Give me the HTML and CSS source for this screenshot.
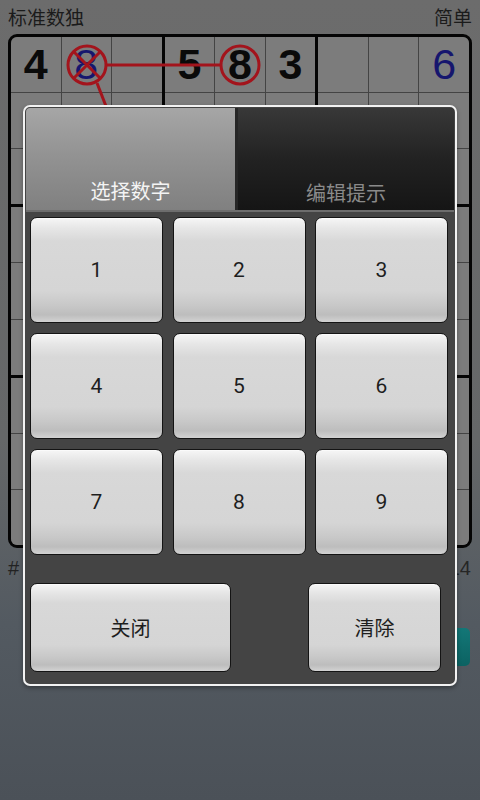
FILE: index.html
```html
<!DOCTYPE html>
<html lang="zh">
<head>
<meta charset="utf-8">
<title>标准数独</title>
<link rel="stylesheet" href="styles.css">
</head>
<body>
<div class="screen">
  <div class="header">
    <span>标准数独</span>
    <span>简单</span>
  </div>
  <div class="board">
    <div class="box">
      <div class="cell given">4</div><div class="cell user">8</div><div class="cell"></div>
      <div class="cell"></div><div class="cell"></div><div class="cell"></div>
      <div class="cell"></div><div class="cell"></div><div class="cell"></div>
    </div>
    <div class="box">
      <div class="cell given">5</div><div class="cell given">8</div><div class="cell given">3</div>
      <div class="cell"></div><div class="cell"></div><div class="cell"></div>
      <div class="cell"></div><div class="cell"></div><div class="cell"></div>
    </div>
    <div class="box">
      <div class="cell"></div><div class="cell"></div><div class="cell user">6</div>
      <div class="cell"></div><div class="cell"></div><div class="cell"></div>
      <div class="cell"></div><div class="cell"></div><div class="cell"></div>
    </div>
    <div class="box">
      <div class="cell"></div><div class="cell"></div><div class="cell"></div>
      <div class="cell"></div><div class="cell"></div><div class="cell"></div>
      <div class="cell"></div><div class="cell"></div><div class="cell"></div>
    </div>
    <div class="box">
      <div class="cell"></div><div class="cell"></div><div class="cell"></div>
      <div class="cell"></div><div class="cell"></div><div class="cell"></div>
      <div class="cell"></div><div class="cell"></div><div class="cell"></div>
    </div>
    <div class="box">
      <div class="cell"></div><div class="cell"></div><div class="cell"></div>
      <div class="cell"></div><div class="cell"></div><div class="cell"></div>
      <div class="cell"></div><div class="cell"></div><div class="cell"></div>
    </div>
    <div class="box">
      <div class="cell"></div><div class="cell"></div><div class="cell"></div>
      <div class="cell"></div><div class="cell"></div><div class="cell"></div>
      <div class="cell"></div><div class="cell"></div><div class="cell"></div>
    </div>
    <div class="box">
      <div class="cell"></div><div class="cell"></div><div class="cell"></div>
      <div class="cell"></div><div class="cell"></div><div class="cell"></div>
      <div class="cell"></div><div class="cell"></div><div class="cell"></div>
    </div>
    <div class="box">
      <div class="cell"></div><div class="cell"></div><div class="cell"></div>
      <div class="cell"></div><div class="cell"></div><div class="cell"></div>
      <div class="cell"></div><div class="cell"></div><div class="cell"></div>
    </div>
    <svg class="marks" width="464" height="514" viewBox="0 0 464 514">
      <g fill="none" stroke="#a3141c" stroke-width="3">
        <circle cx="79" cy="31" r="19"/>
        <line x1="66" y1="18" x2="92" y2="44"/>
        <line x1="92" y1="18" x2="66" y2="44"/>
        <circle cx="232" cy="31" r="19"/>
        <line x1="98" y1="31" x2="213" y2="31"/>
        <line x1="89" y1="49" x2="101" y2="80"/>
      </g>
    </svg>
  </div>
  <div class="status">
    <span class="puzzle">#<span class="gap"></span>1024</span>
    <span class="timer">10:14</span>
  </div>
  <div class="actions">
    <div class="teal-btn"></div>
  </div>
</div>

<div class="dialog">
  <div class="tabs">
    <div class="tab active">选择数字</div>
    <div class="tab">编辑提示</div>
  </div>
  <div class="keys">
    <div class="key">1</div>
    <div class="key">2</div>
    <div class="key">3</div>
    <div class="key">4</div>
    <div class="key">5</div>
    <div class="key">6</div>
    <div class="key">7</div>
    <div class="key">8</div>
    <div class="key">9</div>
  </div>
  <div class="bottom-row">
    <div class="key wide">关闭</div>
    <div class="key">清除</div>
  </div>
</div>
</body>
</html>
```

FILE: styles.css
```css
html, body {
  margin: 0;
  padding: 0;
}

body {
  width: 480px;
  height: 800px;
  overflow: hidden;
  position: relative;
  background: linear-gradient(180deg, #6c6c6c 0%, #656768 55%, #535a61 78%, #4b5158 100%);
  font-family: "Noto Sans CJK SC", "Noto Sans", sans-serif;
  color: #1b1b1b;
}

.screen {
  padding: 0 8px;
}

.header {
  height: 34px;
  display: flex;
  justify-content: space-between;
  align-items: center;
  font-size: 19px;
  line-height: 1;
  padding-bottom: 2px;
  box-sizing: border-box;
}

.board {
  position: relative;
  height: 514px;
  box-sizing: border-box;
  border: 3px solid #050505;
  border-radius: 9px;
  overflow: hidden;
  background: #050505;
  display: grid;
  grid-template-columns: repeat(3, 1fr);
  grid-template-rows: repeat(3, 1fr);
  gap: 3px;
}

.box {
  display: grid;
  grid-template-columns: repeat(3, 1fr);
  grid-template-rows: repeat(3, 1fr);
  gap: 1px;
  background: #444;
}

.cell {
  background: #7c7c7c;
  display: flex;
  align-items: center;
  justify-content: center;
  font-family: "Liberation Sans", Arial, sans-serif;
  font-size: 43px;
  line-height: 1;
}

.cell.given {
  font-weight: bold;
  color: #0a0a0a;
}

.cell.user {
  color: #16166e;
}

.marks {
  position: absolute;
  left: -3px;
  top: -3px;
}

.status {
  display: flex;
  justify-content: space-between;
  font-family: "Liberation Sans", Arial, sans-serif;
  font-size: 20px;
  color: #222;
  margin-top: 9px;
  height: 23px;
  padding-right: 1px;
}

.status .gap {
  display: inline-block;
  width: 8px;
}

.status .timer {
  color: #262626;
}

.actions {
  display: flex;
  justify-content: flex-end;
  margin-top: 48px;
}

.teal-btn {
  width: 140px;
  height: 38px;
  border-radius: 5px;
  background: linear-gradient(180deg, #137777 0%, #0c6262 100%);
  margin-right: 2px;
}

.dialog {
  position: absolute;
  left: 23px;
  top: 105px;
  width: 434px;
  height: 581px;
  box-sizing: border-box;
  border: 2px solid #f2f2f2;
  border-radius: 7px;
  background: #444444;
  padding: 1px;
  box-shadow: 0 2px 4px rgba(0, 0, 0, 0.35);
}

.tabs {
  display: grid;
  grid-template-columns: 209px 1fr;
  gap: 3px;
  height: 102px;
  background: #262626;
  border-bottom: 2px solid #6d6d6d;
  border-radius: 4px 4px 0 0;
  overflow: hidden;
}

.tab {
  display: flex;
  align-items: flex-end;
  justify-content: center;
  padding-bottom: 5px;
  box-sizing: border-box;
  font-size: 20px;
  line-height: 1.2;
  color: #8a8a8a;
  background: linear-gradient(180deg, #383838 0%, #222 50%, #151515 100%);
}

.tab.active {
  color: #f4f4f4;
  padding-bottom: 7px;
  background: linear-gradient(180deg, #a6a6a6 0%, #939393 45%, #808080 100%);
}

.keys {
  display: grid;
  grid-template-columns: repeat(3, 133px);
  grid-template-rows: repeat(3, 106px);
  gap: 10px 9.5px;
  padding: 5px 4px 0 4px;
}

.key {
  box-sizing: border-box;
  border: 1px solid #141414;
  border-radius: 7px;
  background: linear-gradient(180deg, #f6f6f6 0%, #e6e6e6 10%, #d8d8d8 22%, #d5d5d5 70%, #c8c8c8 84%, #bdbdbd 93%, #d2d2d2 100%);
  box-shadow: inset 0 1px 0 #fafafa;
  display: flex;
  align-items: center;
  justify-content: center;
  font-family: "Roboto", "Noto Sans CJK SC", sans-serif;
  font-size: 21px;
  color: #1e1e1e;
  width: 133px;
}

.bottom-row {
  display: flex;
  justify-content: space-between;
  height: 89px;
  margin-top: 28px;
  padding: 0 13px 0 4px;
}

.bottom-row .key {
  font-family: "Noto Sans CJK SC", sans-serif;
  font-size: 20px;
}

.bottom-row .key.wide {
  width: 201px;
}
```
